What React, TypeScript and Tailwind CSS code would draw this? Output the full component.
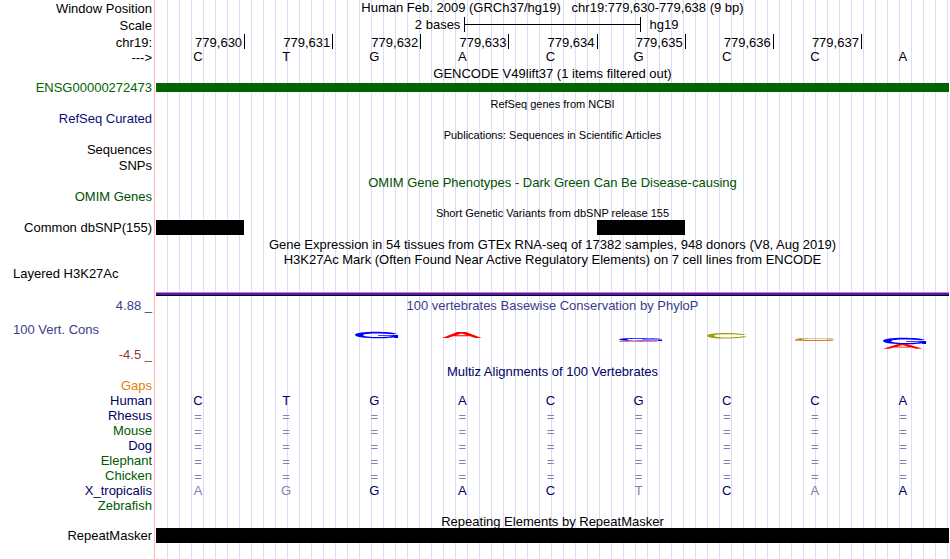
import { ReactNode } from "react";
import clsx from "clsx";

const sequence = ["C", "T", "G", "A", "C", "G", "C", "C", "A"]
const positions = ["779,630", "779,631", "779,632", "779,633", "779,634", "779,635", "779,636", "779,637", ""]
const gapRow = ["=", "=", "=", "=", "=", "=", "=", "=", "="]

const species = [
    { name: "Human", color: "text-[#000064]", bases: sequence },
    { name: "Rhesus", color: "text-[#000064]", bases: gapRow },
    { name: "Mouse", color: "text-[#005a00]", bases: gapRow },
    { name: "Dog", color: "text-[#000064]", bases: gapRow },
    { name: "Elephant", color: "text-[#005a00]", bases: gapRow },
    { name: "Chicken", color: "text-[#005a00]", bases: gapRow },
    { name: "X_tropicalis", color: "text-[#000064]", bases: ["A", "G", "G", "A", "C", "T", "C", "A", "A"] },
    { name: "Zebrafish", color: "text-[#005a00]", bases: [] },
]

interface IRow {
    label?: ReactNode
    labelClass?: string
    className?: string
    children?: ReactNode
}

// One line of the browser: label on the left, guide lines and data on the right
const Row = ({ label, labelClass = "text-right", className, children }: IRow) => (
    <div className={clsx("flex", className)}>
        <div className={clsx("w-[154px] shrink-0 pr-0.5 whitespace-nowrap", labelClass)}>{label}</div>
        <div className="flex-1 min-w-0 flex border-l border-[#ffb4b4] px-px">
            <div className="flex-1 min-w-0 bg-[repeating-linear-gradient(to_right,transparent_0px,transparent_11px,#dcdcf8_11px,#dcdcf8_12px)]">
                {children}
            </div>
        </div>
    </div>
)

interface ITitle {
    label?: string
    labelClass?: string
    className?: string
    small?: boolean
    children: ReactNode
}

const Title = ({ label, labelClass, className, small, children }: ITitle) => (
    <Row label={label} labelClass={labelClass} className="h-[14px] leading-4">
        <h2 className={clsx("text-center whitespace-pre", small && "text-[11px] leading-[14px]", className)}>{children}</h2>
    </Row>
)

const Spacer = ({ className = "h-0.5" }: { className?: string }) => <Row className={className} />

const Bases = ({ bases, faded }: { bases: string[], faded?: boolean }) => (
    <div className="grid grid-cols-9">
        {bases.map((base, i) => (
            <span
                key={i}
                className={clsx(
                    "pr-1 text-center",
                    base === "=" && "pt-px",
                    faded && base !== sequence[i] && "text-[#8080b2]"
                )}
            >{base}</span>
        ))}
    </div>
)

// Conservation marks, each drawn in a flat box six units high
const hook = "M42 2C36 -.8 0 -1.2 0 3C0 7 33 6.8 39 5.2V6H43V3H23V3.8H38C33 5.6 8 5.6 8 3C8 1 29 1 37 2.2Z"
const peak = "M0 6L15 0H24L39.5 6H33L28 4.3H11L6 6ZM14 3.3H25L19.5 1.4Z"
const bowl = "M39 1.8C32 -.7 0 -1.2 0 3C0 7.2 32 6.7 40 4.2L36 3.7C29 5.5 7 5.5 7 3C7 .9 28 .9 35 2.3Z"

interface IMark {
    d: string
    x?: number
    y: number
    scale?: number
    fill: string
    opacity?: number
}

const marks: IMark[][] = [
    [],
    [],
    [{ d: hook, x: 23, y: 20, fill: "#0000ff" }],
    [{ d: peak, y: 20, fill: "#ff0000" }],
    [],
    [
        { d: hook, y: 26, scale: 0.5, fill: "#0000ff" },
        { d: "M0 0H38V1H0Z", y: 29, fill: "#ff0000", opacity: 0.5 },
    ],
    [{ d: bowl, y: 21, scale: 0.9, fill: "#a0a000" }],
    [
        { d: bowl, y: 26, scale: 0.4, fill: "#a0a000" },
        { d: "M0 0H38V1H0Z", y: 28, fill: "#ff0000", opacity: 0.5 },
    ],
    [
        { d: hook, y: 26, fill: "#0000ff" },
        { d: peak, y: 32, scale: 0.8, fill: "#ff0000" },
    ],
]

const App = () => {
    return (
        <main className="w-full bg-white text-black text-[13px] font-['Liberation_Sans',Arial,sans-serif]">

            {/* Position */}
            <Row label="Window Position" className="h-4 leading-[17px]">
                <h1 className="text-center whitespace-pre leading-[15px]">Human Feb. 2009 (GRCh37/hg19)   chr19:779,630-779,638 (9 bp)</h1>
            </Row>
            <Row label="Scale" className="h-[17px] leading-[19px]">
                <div className="grid grid-cols-18 h-full pt-px leading-4">
                    <span className="col-span-7 pr-1 text-right">2 bases</span>
                    <div className="col-span-4 h-[15px] border-x border-black">
                        <div className="h-2 border-b border-black" />
                    </div>
                    <span className="col-span-7 pl-[9px]">hg19</span>
                </div>
            </Row>
            <Row label="chr19:" className="h-[17px] leading-[19px]">
                <div className="grid grid-cols-9 pt-px">
                    {positions.map((position, i) => (
                        <span
                            key={i}
                            className={clsx("h-[15px] pr-0.5 text-right leading-[17px] border-black", i > 0 && "border-l")}
                        >{position}</span>
                    ))}
                </div>
            </Row>
            <Row label="--->" className="h-4 leading-4">
                <div className="leading-[14px]">
                    <Bases bases={sequence} />
                </div>
            </Row>

            {/* Genes */}
            <Title>GENCODE V49lift37 (1 items filtered out)</Title>
            <Row label="ENSG00000272473" labelClass="text-right text-[#006400]" className="h-[15px] leading-[15px]">
                <div className="pt-[3px]">
                    <div className="h-[9px] bg-[#006400]" />
                </div>
            </Row>
            <Spacer />
            <Title small>RefSeq genes from NCBI</Title>
            <Row label="RefSeq Curated" labelClass="text-right text-[#0c0c78]" className="h-[15px] leading-[15px]" />
            <Spacer />

            {/* Literature */}
            <Title small>Publications: Sequences in Scientific Articles</Title>
            <Row label="Sequences" className="h-[15px] leading-[15px]" />
            <Row label="SNPs" className="h-4 leading-[17px]" />
            <Spacer />
            <Title className="text-[#005000]">OMIM Gene Phenotypes - Dark Green Can Be Disease-causing</Title>
            <Row label="OMIM Genes" labelClass="text-right text-[#005000]" className="h-[15px] leading-[15px]" />
            <Spacer />

            {/* Variants */}
            <Title small>Short Genetic Variants from dbSNP release 155</Title>
            <Row label="Common dbSNP(155)" className="h-[15px] leading-[15px]">
                <div className="grid grid-cols-9 h-full">
                    <div className="bg-black" />
                    <div className="col-start-6 bg-black" />
                </div>
            </Row>
            <Spacer />

            {/* Expression and regulation */}
            <Title>Gene Expression in 54 tissues from GTEx RNA-seq of 17382 samples, 948 donors (V8, Aug 2019)</Title>
            <Spacer className="h-px" />
            <Title>H3K27Ac Mark (Often Found Near Active Regulatory Elements) on 7 cell lines from ENCODE</Title>
            <Row label="Layered H3K27Ac" labelClass="pl-[13px]" className="h-[30px] leading-[15px]">
                <div className="flex flex-col justify-end h-full">
                    <div className="h-px bg-[#ff69b4]" />
                    <div className="h-0.5 bg-[#3c1ec8]" />
                    <div className="h-px bg-black" />
                </div>
            </Row>
            <Spacer />

            {/* Conservation */}
            <Title label="4.88 _" labelClass="text-right text-[#3c3c8c]" className="text-[#3c3c8c]">100 vertebrates Basewise Conservation by PhyloP</Title>
            <Row
                label={
                    <div className="flex flex-col justify-between h-full pt-2.5">
                        <span className="pl-[13px] text-left text-[#3c3c8c]">100 Vert. Cons</span>
                        <span className="text-right text-[#8c3c3c]">-4.5 _</span>
                    </div>
                }
                labelClass="text-left"
                className="h-[50px] leading-[15px]"
            >
                <div className="grid grid-cols-9">
                    {marks.map((cell, i) => (
                        <svg key={i} viewBox="0 0 88 50" preserveAspectRatio="none" className="w-full h-[50px]" aria-hidden="true">
                            {cell.map(({ d, x = 22, y, scale = 1, fill, opacity }) => (
                                <path
                                    key={y}
                                    d={d}
                                    transform={`translate(${x} ${y}) scale(1 ${scale})`}
                                    fill={fill}
                                    fillOpacity={opacity}
                                    fillRule="evenodd"
                                />
                            ))}
                        </svg>
                    ))}
                </div>
            </Row>
            <Spacer />

            {/* Alignments */}
            <Title className="text-[#000064]">Multiz Alignments of 100 Vertebrates</Title>
            <Row label="Gaps" labelClass="text-right text-[#e08200]" className="h-[15px] leading-[15px]" />
            {species.map(({ name, color, bases }) => (
                <Row key={name} label={name} labelClass={clsx("text-right", color)} className="h-[15px] leading-[15px]">
                    <div className="text-[#000064]">
                        <Bases bases={bases} faded />
                    </div>
                </Row>
            ))}
            <Spacer className="h-px" />

            {/* Repeats */}
            <Title>Repeating Elements by RepeatMasker</Title>
            <Row label="RepeatMasker" className="h-[15px] leading-[15px]">
                <div className="h-full bg-black" />
            </Row>
            <Spacer className="h-4" />

        </main>
    )
}

export default App;
